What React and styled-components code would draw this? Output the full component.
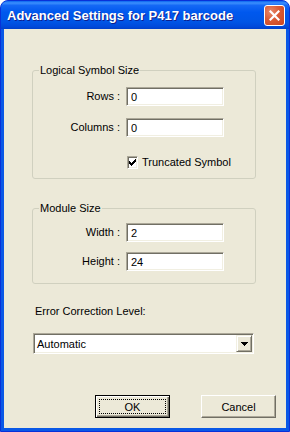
import React from 'react'
import styled, { createGlobalStyle } from 'styled-components'

const GlobalStyle = createGlobalStyle`
html, body {
  margin:0;
  padding:0;
  background:#fff;
}
body {
  font-family:"Liberation Sans", Arial, sans-serif;
  font-size:11px;
  color:#000;
}
`

export default function App() {
    return (
        <>
            <GlobalStyle />
            <Window>
                <TitleBar>
                    <Title>Advanced Settings for P417 barcode</Title>
                    <CloseButton aria-label="Close">
                        <svg width="11" height="11" viewBox="0 0 11 11">
                            <path d="M1.5 1.5 L9.5 9.5 M9.5 1.5 L1.5 9.5" stroke="#fff" strokeWidth="2.2" strokeLinecap="square" />
                        </svg>
                    </CloseButton>
                </TitleBar>
                <Client>
                    <Group $pad="10px 0 9px">
                        <Legend>Logical Symbol Size</Legend>
                        <FieldRow>
                            <Label>Rows :</Label>
                            <TextBox defaultValue="0" />
                        </FieldRow>
                        <FieldRow $mt={12}>
                            <Label>Columns :</Label>
                            <TextBox defaultValue="0" />
                        </FieldRow>
                        <FieldRow $mt={19}>
                            <span />
                            <CheckLine>
                                <CheckBox>
                                    <svg width="9" height="9" viewBox="0 0 9 9" shapeRendering="crispEdges">
                                        <polygon points="1,3 3,5 8,0 8,3 3,8 1,6" fill="#000" />
                                    </svg>
                                </CheckBox>
                                Truncated Symbol
                            </CheckLine>
                        </FieldRow>
                    </Group>

                    <Group $mt={22} $pad="8px 0 12px">
                        <Legend>Module Size</Legend>
                        <FieldRow>
                            <Label>Width :</Label>
                            <TextBox defaultValue="2" />
                        </FieldRow>
                        <FieldRow $mt={10}>
                            <Label>Height :</Label>
                            <TextBox defaultValue="24" />
                        </FieldRow>
                    </Group>

                    <Caption>Error Correction Level:</Caption>
                    <Combo>
                        <ComboText>Automatic</ComboText>
                        <DropButton>
                            <svg width="7" height="4" viewBox="0 0 7 4" shapeRendering="crispEdges">
                                <polygon points="0,0 7,0 3.5,4" fill="#000" />
                            </svg>
                        </DropButton>
                    </Combo>

                    <ButtonBar>
                        <PushButton $default>
                            <FocusRing>OK</FocusRing>
                        </PushButton>
                        <PushButton>Cancel</PushButton>
                    </ButtonBar>
                </Client>
            </Window>
        </>
    )
}

const Window=styled.div`
width:290px;
height:432px;
box-sizing:border-box;
display:flex;
flex-direction:column;
background:#0A58E6;
border:1px solid #0831D9;
border-radius:8px 8px 0 0;
overflow:hidden;
`;
const TitleBar=styled.div`
height:28px;
flex-shrink:0;
display:flex;
align-items:center;
justify-content:space-between;
padding:0 4px 0 6px;
background:linear-gradient(to bottom, #0A66F0 0%, #3C8FFD 7%, #1468F5 16%, #0058EE 40%, #0055E5 75%, #0049DA 92%, #003FC8 100%);
`;
const Title=styled.div`
font-family:"Liberation Sans", Arial, sans-serif;
font-weight:700;
font-size:13px;
color:#fff;
text-shadow:1px 1px 0 #0F1E8C;
white-space:nowrap;
`;
const CloseButton=styled.div`
width:21px;
height:21px;
box-sizing:border-box;
border:1px solid #fff;
border-radius:3px;
display:flex;
align-items:center;
justify-content:center;
background:radial-gradient(circle at 30% 30%, #E8896A 0%, #DA5B35 45%, #C94420 100%);
`;
const Client=styled.div`
flex:1;
margin:0 3px 3px;
background:#ECE9D8;
display:flex;
flex-direction:column;
padding:34px 10px 10px 28px;
`;
const Group=styled.fieldset`
margin:${p => p.$mt || 0}px 20px 0 0;
padding:${p => p.$pad};
border:1px solid #D0D0BF;
border-radius:3px;
min-width:0;
`;
const Legend=styled.legend`
margin-left:6px;
padding:0 1px;
font-size:11px;
line-height:14px;
color:#000;
`;
const FieldRow=styled.div`
display:grid;
grid-template-columns:87px 98px;
column-gap:6px;
align-items:center;
margin-top:${p => p.$mt || 0}px;
`;
const Label=styled.span`
text-align:right;
line-height:13px;
white-space:nowrap;
`;
const TextBox=styled.input`
width:100%;
height:19px;
box-sizing:border-box;
margin:0;
padding:0 0 0 4px;
border:1px solid;
border-color:#ACA899 #FFFFFF #FFFFFF #ACA899;
box-shadow:inset 1px 1px 0 #716F64, inset -1px -1px 0 #F1EFE2;
background:#fff;
font-family:"Liberation Sans", Arial, sans-serif;
font-size:11px;
color:#000;
outline:none;
`;
const CheckLine=styled.label`
display:flex;
align-items:center;
gap:4px;
margin-left:1px;
line-height:13px;
white-space:nowrap;
`;
const CheckBox=styled.span`
width:13px;
height:13px;
box-sizing:border-box;
display:flex;
align-items:center;
justify-content:center;
background:#fff;
border:1px solid;
border-color:#ACA899 #FFFFFF #FFFFFF #ACA899;
box-shadow:inset 1px 1px 0 #716F64, inset -1px -1px 0 #F1EFE2;
`;
const Caption=styled.div`
margin-top:21px;
padding-left:3px;
line-height:13px;
`;
const Combo=styled.div`
margin:15px 22px 0 1px;
height:21px;
box-sizing:border-box;
display:flex;
align-items:stretch;
padding:1px;
background:#fff;
border:1px solid;
border-color:#ACA899 #FFFFFF #FFFFFF #ACA899;
box-shadow:inset 1px 1px 0 #716F64, inset -1px -1px 0 #F1EFE2;
`;
const ComboText=styled.div`
flex:1;
display:flex;
align-items:center;
padding-left:2px;
font-size:11px;
`;
const DropButton=styled.div`
width:16px;
box-sizing:border-box;
display:flex;
align-items:center;
justify-content:center;
background:#ECE9D8;
border:1px solid;
border-color:#F1EFE2 #716F64 #716F64 #F1EFE2;
box-shadow:inset 1px 1px 0 #fff, inset -1px -1px 0 #ACA899;
`;
const ButtonBar=styled.div`
margin-top:auto;
display:flex;
justify-content:flex-end;
gap:31px;
`;
const PushButton=styled.div`
width:75px;
height:23px;
box-sizing:border-box;
display:flex;
align-items:center;
justify-content:center;
background:#ECE9D8;
font-size:11px;
border:1px solid;
border-color:${p => p.$default ? '#000' : '#FFFFFF #716F64 #716F64 #FFFFFF'};
box-shadow:${p => p.$default
        ? 'inset 1px 1px 0 #fff, inset -1px -1px 0 #716F64, inset -2px -2px 0 #ACA899'
        : 'inset -1px -1px 0 #ACA899'};
padding:${p => p.$default ? '3px' : '0'};
`;
const FocusRing=styled.span`
flex:1;
align-self:stretch;
display:flex;
align-items:center;
justify-content:center;
border:1px dotted #000;
`;
